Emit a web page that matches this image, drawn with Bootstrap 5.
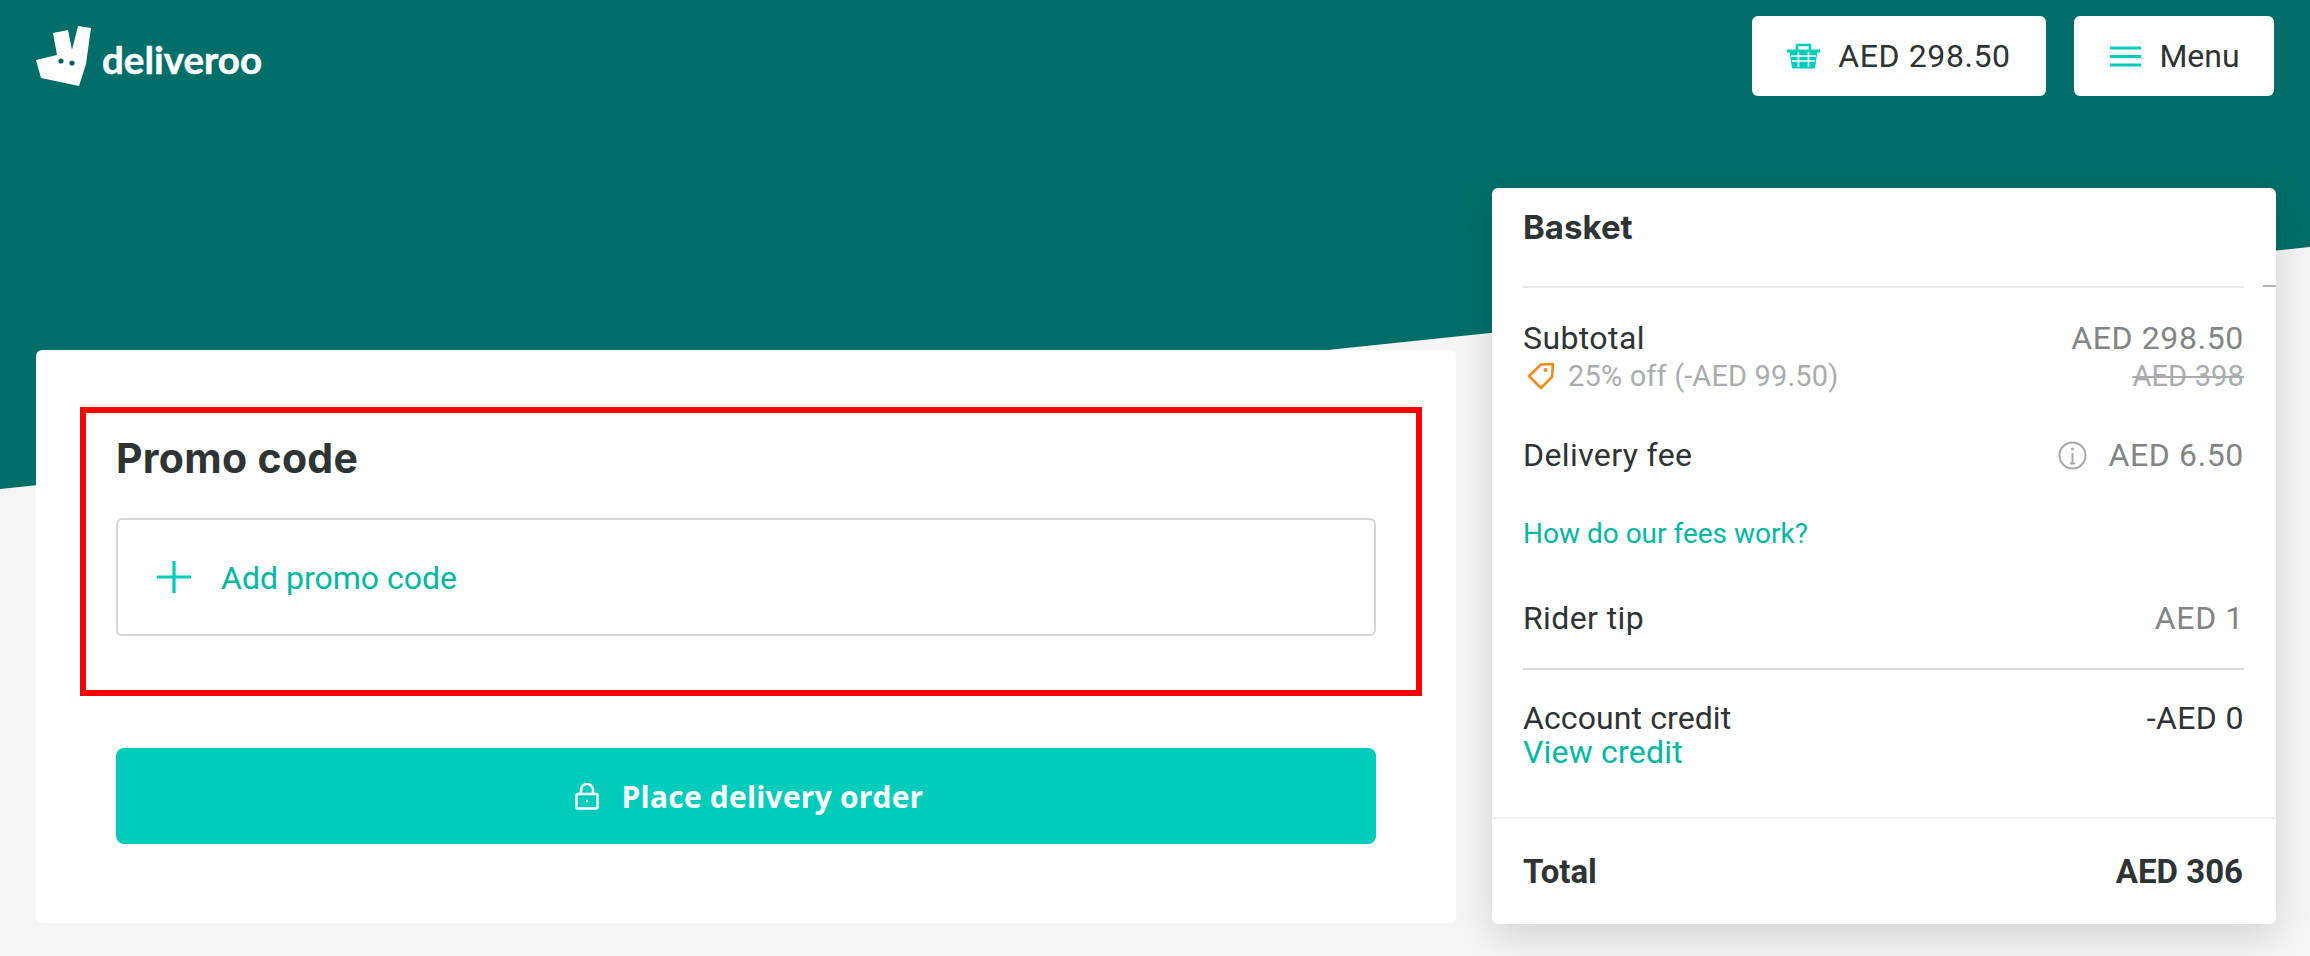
<!DOCTYPE html>
<html lang="en">
<head>
<meta charset="utf-8">
<title>Deliveroo checkout</title>
<link href="https://cdn.jsdelivr.net/npm/bootstrap@5.3.0/dist/css/bootstrap.min.css" rel="stylesheet">
<style>
html,body{height:956px;overflow:hidden}
body{background:#f5f5f5;font-family:"Roboto","Liberation Sans",sans-serif;color:#2e3333}
.stage{position:relative;height:956px;overflow:hidden}
.stage::before{content:"";position:absolute;inset:0 0 auto 0;height:500px;background:#006e68;
  clip-path:polygon(0 0,100% 0,100% 247px,0 489px)}
.stage>*{position:relative}
.topbar{height:188px;padding:16px 36px 0}
.brand-logo{display:flex;align-items:flex-start;gap:11px;padding-top:10px;text-decoration:none;color:#fff}
.brand-word{font-family:"Lato",sans-serif;font-weight:700;font-size:38.500px;line-height:1;margin-top:14px;-webkit-text-stroke:.5px #fff}
.top-btn{height:80px;border:0;border-radius:6px;background:#fff;color:#2e3333;font-size:32px;display:flex;align-items:center;padding:0;justify-content:center}
.top-basket{width:294px;gap:18px;letter-spacing:.6px}
.top-menu{width:200px;margin-left:28px;gap:18px;padding-left:2px}
.main-flow{padding:0 34px 0 36px;gap:36px;align-items:flex-start}
.checkout-panel{width:1420px;height:573px;margin-top:162px;border:0;border-radius:6px;background:#fff;padding:57px 80px 0}
.hl-box{border:6px solid #f00;margin:0 -46px 0 -36px;padding:22px 40px 0 30px;height:289px}
.promo-title{font-family:"Inter",sans-serif;font-weight:700;font-size:41px;letter-spacing:.3px;line-height:46px;color:#2e3333;margin:0 0 37px}
.promo-add{height:118px;border:2px solid #d6d6d6;border-radius:6px;display:flex;align-items:center;padding-left:39px;gap:30px;color:#00b8a2;font-size:32px}
.promo-add span{padding-top:2px}
.order-btn{margin:52px 0 0;height:96px;width:100%;background:#00ccbc;border:0;border-radius:8px;color:#fff;font-family:"Open Sans",sans-serif;font-weight:700;font-size:30px;letter-spacing:.2px;display:flex;align-items:center;justify-content:center;gap:23px;padding:0 0 0 6px}
.basket-panel{width:784px;height:736px;border:0;border-radius:6px;background:#fff;box-shadow:0 12px 36px rgba(0,0,0,.14);position:relative;padding:0}
.basket-scroll{padding:0 32px 0 31px}
.basket-title{font-family:"Inter",sans-serif;font-weight:700;font-size:33px;line-height:40px;margin:0;padding-top:19px;height:100px;border-bottom:2px solid #e8e8e8;color:#2e3333}
.tick{position:absolute;right:0;top:97px;width:13px;height:2px;background:#b5b5b5}
.rowline{font-size:32px;letter-spacing:.4px;line-height:36px}
.row-subtotal{padding-top:32px}
.row-discount{margin-top:3px}
.row-fee{margin-top:44px}
.row-howto{margin-top:44px}
.row-tip{margin-top:49px;padding-bottom:32px}
.row-credit{margin-top:30px}
.row-credit>span:first-child{letter-spacing:.1px}
.row-view{margin-top:-1px;line-height:34px;letter-spacing:.2px}
.muted-val{color:#828585;letter-spacing:.65px}
.faded{color:#aaadad;font-size:29px;letter-spacing:.15px;line-height:34px}
.tag-wrap{margin-left:4px;gap:13px}
.info-wrap{gap:21px}
.teal-link{color:#00b8a2;text-decoration:none}
.small-link{font-size:28px;line-height:34px}
.sep2{height:2px;background:#d8d8d8;margin:0}
.basket-foot{position:absolute;left:0;right:0;bottom:0;height:107px;border-top:2px solid #f3f3f3;padding:0 33px 0 31px;display:flex;align-items:center;justify-content:space-between;font-weight:700;font-size:33px;color:#2e3333}
</style>
</head>
<body>
<div class="stage">
  <nav class="topbar d-flex justify-content-between align-items-start">
    <a class="brand-logo" href="#">
      <svg width="55" height="60" viewBox="0 0 55 60" aria-hidden="true">
        <polygon fill="#fff" points="42,0 55,2 50,38 43,60 5,52 0,34 21,29 17,7 32,4 36,24" />
        <circle cx="25" cy="35" r="2.6" fill="#00645e"/><circle cx="36" cy="37" r="2.6" fill="#00645e"/>
      </svg>
      <span class="brand-word">deliveroo</span>
    </a>
    <div class="d-flex">
      <button class="top-btn top-basket" type="button">
        <svg width="33" height="26" viewBox="0 0 33 26" aria-hidden="true" fill="none" stroke="#00ccbc" stroke-width="2">
          <path d="M10 8V2h13v6" stroke-width="2.5"/>
          <path d="M0 8h33" stroke-width="3"/>
          <path d="M3 8l2.5 17h22L30 8z" fill="#00ccbc" stroke-width="1"/>
          <path d="M4 13h25M5 18h23M11.500 9v15M21.500 9v15" stroke="#fff" stroke-width="1.600"/>
        </svg>
        <span>AED 298.50</span>
      </button>
      <button class="top-btn top-menu" type="button">
        <svg width="31" height="21" viewBox="0 0 31 21" aria-hidden="true" fill="none" stroke="#00ccbc" stroke-width="3"><path d="M0 2h31M0 10.500h31M0 19h31"/></svg>
        <span>Menu</span>
      </button>
    </div>
  </nav>
  <div class="main-flow d-flex">
    <section class="card checkout-panel">
      <div class="hl-box">
        <h2 class="promo-title">Promo code</h2>
        <div class="promo-add">
          <svg width="34" height="32" viewBox="0 0 34 32" aria-hidden="true" fill="none" stroke="#00ccbc" stroke-width="3.200"><path d="M17 0v32M0 16h34"/></svg>
          <span>Add promo code</span>
        </div>
      </div>
      <button class="order-btn" type="button">
        <svg width="24" height="27" viewBox="0 0 24 27" aria-hidden="true" fill="none" stroke="#fff" stroke-width="2.500"><path d="M6 11V7a6 6 0 0 1 12 0v4"/><rect x="1.500" y="11" width="21" height="14.500" rx="1"/><circle cx="12" cy="18" r="1.200" fill="#fff" stroke="none"/></svg>
        <span>Place delivery order</span>
      </button>
    </section>
    <aside class="card basket-panel">
      <span class="tick"></span>
      <div class="basket-scroll">
        <h2 class="basket-title">Basket</h2>
        <div class="rowline row-subtotal d-flex justify-content-between">
          <span>Subtotal</span><span class="muted-val">AED 298.50</span>
        </div>
        <div class="faded row-discount d-flex justify-content-between">
          <span class="tag-wrap d-flex align-items-center">
            <svg width="28" height="28" viewBox="0 0 28 28" aria-hidden="true" fill="none" stroke="#f08a1d" stroke-width="2.600" stroke-linejoin="round"><path d="M14 2.500 26 2l-1 13-11 11L2 14z"/><circle cx="18.500" cy="8" r="2" fill="#f08a1d" stroke="none"/></svg>
            <span>25% off (-AED 99.50)</span>
          </span>
          <s>AED 398</s>
        </div>
        <div class="rowline row-fee d-flex justify-content-between align-items-center">
          <span>Delivery fee</span>
          <span class="muted-val info-wrap d-flex align-items-center">
            <svg width="29" height="29" viewBox="0 0 29 29" aria-hidden="true" fill="none" stroke="#a8a8a8" stroke-width="2"><circle cx="14.500" cy="14.500" r="13"/><path d="M14.500 12v10M12 22.500h5"/><circle cx="14.500" cy="8" r="1.500" fill="#a8a8a8" stroke="none"/></svg>
            <span>AED 6.50</span>
          </span>
        </div>
        <div class="small-link row-howto"><a href="#" class="teal-link">How do our fees work?</a></div>
        <div class="rowline row-tip d-flex justify-content-between">
          <span>Rider tip</span><span class="muted-val">AED 1</span>
        </div>
        <div class="sep2"></div>
        <div class="rowline row-credit d-flex justify-content-between">
          <span>Account credit</span><span>-AED 0</span>
        </div>
        <div class="rowline row-view"><a href="#" class="teal-link">View credit</a></div>
      </div>
      <div class="basket-foot"><span>Total</span><span>AED 306</span></div>
    </aside>
  </div>
</div>
</body>
</html>
